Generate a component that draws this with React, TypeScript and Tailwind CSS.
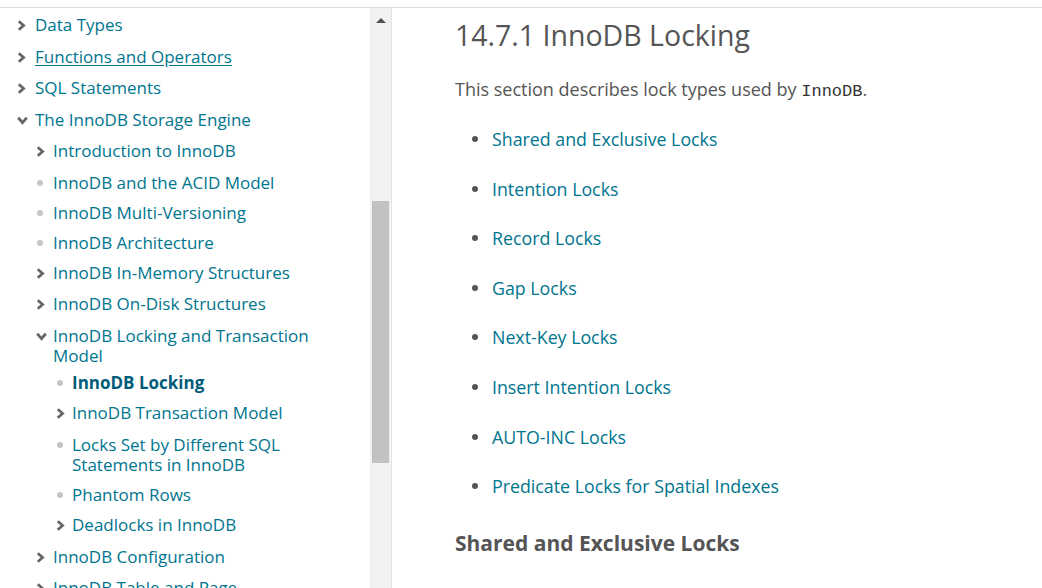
import React from "react";

const LINK = "text-[#00758f]";

function ChevRight() {
  return (
    <svg width="9" height="11" viewBox="0 0 9 11" className="shrink-0">
      <path d="M1.8 1.2 L6.6 5.5 L1.8 9.8" fill="none" stroke="#666" strokeWidth="2.8" strokeLinejoin="miter" />
    </svg>
  );
}
function ChevDown() {
  return (
    <svg width="11" height="9" viewBox="0 0 11 9" className="shrink-0">
      <path d="M1.2 1.8 L5.5 6.6 L9.8 1.8" fill="none" stroke="#666" strokeWidth="2.8" strokeLinejoin="miter" />
    </svg>
  );
}
function Dot() {
  return <span className="block ml-[1px] w-[6px] h-[6px] rounded-full bg-[#c4c4c4] shrink-0" />;
}

type Item = {
  t: string;
  icon: "r" | "d" | "dot";
  level: number;
  u?: boolean;
  active?: boolean;
  mt: number;
};

const items: Item[] = [
  { t: "Data Types", icon: "r", level: 0, mt: 0 },
  { t: "Functions and Operators", icon: "r", level: 0, u: true, mt: 12 },
  { t: "SQL Statements", icon: "r", level: 0, mt: 11 },
  { t: "The InnoDB Storage Engine", icon: "d", level: 0, mt: 12 },
  { t: "Introduction to InnoDB", icon: "r", level: 1, mt: 11 },
  { t: "InnoDB and the ACID Model", icon: "dot", level: 1, mt: 12 },
  { t: "InnoDB Multi-Versioning", icon: "dot", level: 1, mt: 10 },
  { t: "InnoDB Architecture", icon: "dot", level: 1, mt: 10 },
  { t: "InnoDB In-Memory Structures", icon: "r", level: 1, mt: 10 },
  { t: "InnoDB On-Disk Structures", icon: "r", level: 1, mt: 11 },
  { t: "InnoDB Locking and Transaction Model", icon: "d", level: 1, mt: 12 },
  { t: "InnoDB Locking", icon: "dot", level: 2, active: true, mt: 7 },
  { t: "InnoDB Transaction Model", icon: "r", level: 2, mt: 10 },
  { t: "Locks Set by Different SQL Statements in InnoDB", icon: "dot", level: 2, mt: 12 },
  { t: "Phantom Rows", icon: "dot", level: 2, mt: 10 },
  { t: "Deadlocks in InnoDB", icon: "r", level: 2, mt: 10 },
  { t: "InnoDB Configuration", icon: "r", level: 1, mt: 12 },
  { t: "InnoDB Table and Page Compression", icon: "r", level: 1, mt: 11 },
];

const levelCls: Record<number, { row: string; iconBox: string; text: string }> = {
  0: { row: "pl-[17px]", iconBox: "w-[18px]", text: "w-[300px]" },
  1: { row: "pl-[36px]", iconBox: "w-[17px]", text: "w-[270px]" },
  2: { row: "pl-[56px]", iconBox: "w-[16px]", text: "w-[230px]" },
};

const locks = [
  "Shared and Exclusive Locks",
  "Intention Locks",
  "Record Locks",
  "Gap Locks",
  "Next-Key Locks",
  "Insert Intention Locks",
  "AUTO-INC Locks",
  "Predicate Locks for Spatial Indexes",
];

export default function App() {
  return (
    <div className="w-[1042px] h-[588px] overflow-hidden bg-white font-['Open_Sans',sans-serif]">
      <div className="h-[7px]" />
      <div className="h-px bg-[#dcdce0]" />
      <div className="flex h-[580px]">
        <nav className="w-[370px] overflow-hidden pt-[7px] text-[17px] leading-[20px]">
          {items.map((it, i) => {
            const c = levelCls[it.level];
            return (
              <div key={i} className={`flex items-start ${c.row}`} style={{ marginTop: it.mt }}>
                <span className={`${c.iconBox} h-[20px] flex items-center shrink-0`}>
                  {it.icon === "r" ? <ChevRight /> : it.icon === "d" ? <ChevDown /> : <Dot />}
                </span>
                <span
                  className={`${c.text} ${it.active ? "font-bold text-[#005c78]" : LINK} ${it.u ? "underline underline-offset-2" : ""}`}
                >
                  {it.t}
                </span>
              </div>
            );
          })}
        </nav>
        <div className="w-[22px] bg-[#f1f1f1] border-r border-[#e4e4e4] flex flex-col items-center shrink-0">
          <div className="mt-[10px] w-0 h-0 border-l-[5px] border-r-[5px] border-b-[5px] border-l-transparent border-r-transparent border-b-[#505050]" />
          <div className="mt-[178px] w-[17px] h-[262px] bg-[#c1c1c1]" />
        </div>
        <main className="flex-1 pl-[63px] text-[#555555]">
          <h1 className="mt-[9px] text-[28.5px] leading-[36px] font-normal">14.7.1 InnoDB Locking</h1>
          <p className="mt-[24px] text-[18px] leading-[24px]">
            This section describes lock types used by{" "}
            <code className="font-['Liberation_Mono',monospace] text-[17px] text-[#333]">InnoDB</code>.
          </p>
          <ul className="mt-[23px]">
            {locks.map((l, i) => (
              <li key={l} className="flex items-center leading-[24px] text-[17.8px]" style={{ marginTop: i === 0 ? 0 : 25.6 }}>
                <span className="ml-[17px] w-[6px] h-[6px] rounded-full bg-[#555] shrink-0" />
                <span className={`ml-[14px] ${LINK}`}>{l}</span>
              </li>
            ))}
          </ul>
          <h3 className="mt-[31px] text-[21px] leading-[28px] font-bold">Shared and Exclusive Locks</h3>
          <p className="mt-[28px] text-[18px] leading-[24px]">
            <code className="font-['Liberation_Mono',monospace] text-[17px] text-[#333]">InnoDB</code> implements standard
            row-level locking where there are two types of locks, shared (S) locks and exclusive (X) locks.
          </p>
        </main>
      </div>
    </div>
  );
}
